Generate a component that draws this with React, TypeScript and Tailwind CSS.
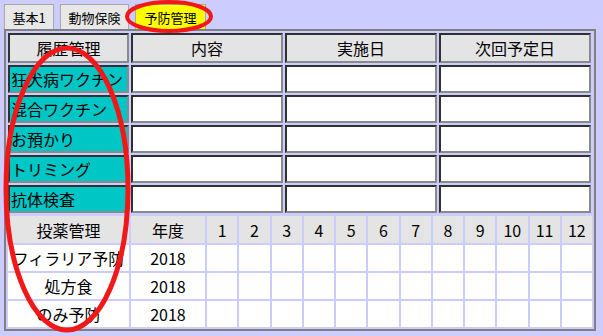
import React from 'react'

const font = { fontFamily: '"Noto Sans CJK JP", "Noto Sans", sans-serif' }

const tabs = [
    { label: '基本1', w: 'w-[50px]', active: false },
    { label: '動物保険', w: 'w-[69px]', active: false },
    { label: '予防管理', w: 'w-[71px]', active: true },
]

const history = ['狂犬病ワクチン', '混合ワクチン', 'お預かり', 'トリミング', '抗体検査']

const meds = ['フィラリア予防', '処方食', 'のみ予防']

const months = [1, 2, 3, 4, 5, 6, 7, 8, 9, 10, 11, 12]

// inset-style cell frame used by the history table
const frame = 'border-2 border-t-[#303030] border-l-[#303030] border-r-[#8a8a8a] border-b-[#8a8a8a]'

export default function App() {
    return (
        <div className="relative w-[603px] h-[336px] overflow-hidden bg-[#ccccff] text-black" style={font}>
            <div className="flex items-end gap-[6px] pl-[4px] pt-[4px] h-[29px]">
                {tabs.map(tab => (
                    <div
                        key={tab.label}
                        className={`${tab.w} h-[25px] flex items-center justify-center text-[13px] leading-none border border-b-0 border-[#a8a8a8] ${tab.active ? 'bg-[#ffff00]' : 'bg-[#e8e8e8]'}`}
                    >
                        {tab.label}
                    </div>
                ))}
            </div>

            <div className="ml-[4px] w-[592px] border-2 border-[#808080] p-[2px] flex flex-col gap-[3px]">
                {/* 履歴管理 */}
                <div className="grid grid-cols-[121px_152px_152px_152px] grid-rows-[30px_repeat(5,28px)] gap-[2px] text-[16px] leading-none">
                    {['履歴管理', '内容', '実施日', '次回予定日'].map(h => (
                        <div key={h} className={`${frame} bg-[#e4e4e4] flex items-center justify-center`}>{h}</div>
                    ))}
                    {history.map(name => (
                        <React.Fragment key={name}>
                            <div className={`${frame} bg-[#00c6c6] flex items-center pl-[1px] whitespace-nowrap overflow-hidden`}>{name}</div>
                            <div className={`${frame} bg-white`} />
                            <div className={`${frame} bg-white`} />
                            <div className={`${frame} bg-white`} />
                        </React.Fragment>
                    ))}
                </div>

                {/* 投薬管理 */}
                <div className="grid grid-cols-[121px_74px_repeat(12,1fr)] grid-rows-[27px_repeat(3,26px)] gap-[2px] text-[16px] leading-none">
                    <div className="bg-[#e4e4e4] flex items-center justify-center">投薬管理</div>
                    <div className="bg-[#e4e4e4] flex items-center justify-center">年度</div>
                    {months.map(m => (
                        <div key={m} className="bg-[#e4e4e4] flex items-center justify-center">{m}</div>
                    ))}
                    {meds.map(name => (
                        <React.Fragment key={name}>
                            <div className="bg-white flex items-center justify-center whitespace-nowrap overflow-hidden">{name}</div>
                            <div className="bg-white flex items-center justify-center">2018</div>
                            {months.map(m => (
                                <div key={m} className="bg-white" />
                            ))}
                        </React.Fragment>
                    ))}
                </div>
            </div>

            {/* red marker rings */}
            <svg className="absolute inset-0 pointer-events-none" width="603" height="336" viewBox="0 0 603 336">
                <ellipse cx="169" cy="16.5" rx="42" ry="14.5" fill="none" stroke="#f01818" strokeWidth="4" />
                <ellipse cx="67" cy="189" rx="61" ry="141" fill="none" stroke="#f01818" strokeWidth="5" />
            </svg>
        </div>
    )
}
